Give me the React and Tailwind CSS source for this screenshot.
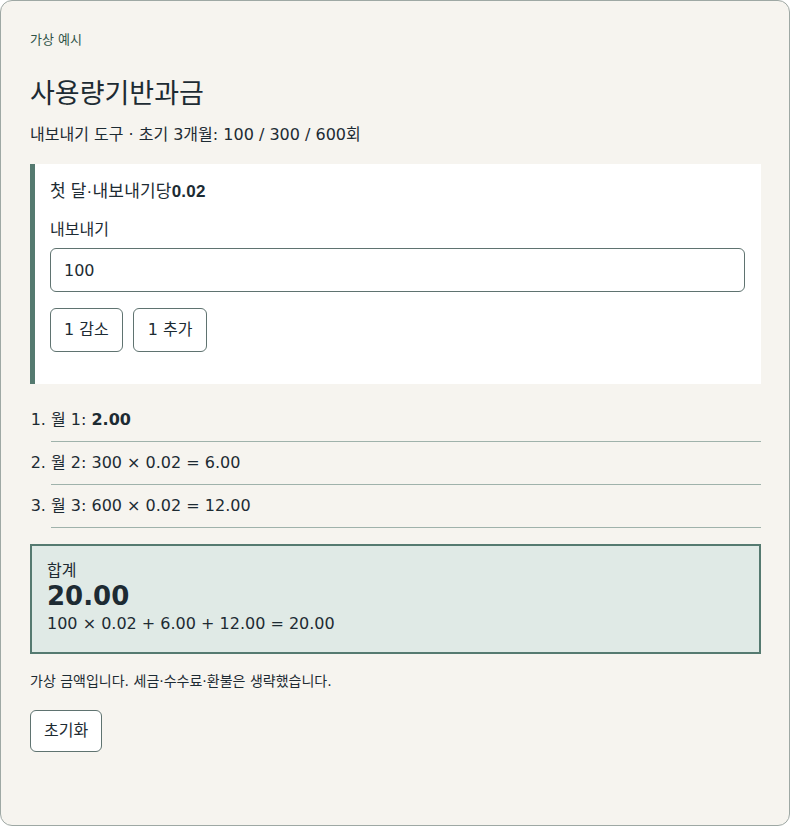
import React, { useState } from "react";

const RATE = 0.02;
const MONTHS = [100, 300, 600];

export default function App() {
  const [exportsCount, setExportsCount] = useState(100);

  const first = exportsCount * RATE;
  const rest = MONTHS.slice(1).map((n) => n * RATE);
  const total = first + rest.reduce((a, b) => a + b, 0);

  return (
    <div className="w-[790px] h-[826px] bg-[#f6f4ef] border border-[#9ea8a4] rounded-[12px] pl-[29px] pr-[28px] pt-[29px] text-[#1d2b33] font-['DejaVu_Sans','Noto_Sans_CJK_KR',sans-serif]">
      <p className="text-[13px] leading-[20px] text-[#2f5348]">가상 예시</p>

      <h1 className="mt-[24px] text-[27px] leading-[36px] font-['Noto_Sans_CJK_KR',sans-serif] text-[#1d2b33]">
        사용량기반과금
      </h1>

      <p className="mt-[13px] text-[16px] leading-[24px]">
        내보내기 도구 · 초기 3개월: 100 / 300 / 600회
      </p>

      <div className="mt-[17px] bg-white border-l-[5px] border-[#557a70] pl-[15px] pr-[16px] pt-[16px] pb-[32px]">
        <p className="text-[17px] leading-[24px] tracking-[0.2px] font-['Liberation_Sans','Noto_Sans_CJK_KR',sans-serif]">
          첫 달·내보내기당<strong className="font-bold">0.02</strong>
        </p>
        <label htmlFor="exports" className="block mt-[14px] text-[16px] leading-[24px]">
          내보내기
        </label>
        <input
          id="exports"
          type="text"
          value={exportsCount}
          onChange={(e) => setExportsCount(Number(e.target.value) || 0)}
          className="mt-[6px] block w-full h-[44px] px-[13px] bg-white border border-[#5f7370] rounded-[6px] text-[16px] outline-none"
        />
        <div className="mt-[16px] flex gap-[10px]">
          <button
            onClick={() => setExportsCount(Math.max(0, exportsCount - 1))}
            className="h-[44px] px-[13px] bg-white border border-[#5f7370] rounded-[6px] text-[16px]"
          >
            1 감소
          </button>
          <button
            onClick={() => setExportsCount(exportsCount + 1)}
            className="h-[44px] px-[14px] bg-white border border-[#5f7370] rounded-[6px] text-[16px]"
          >
            1 추가
          </button>
        </div>
      </div>

      <ol className="mt-[15px] pl-[21px] list-decimal text-[16px] leading-[24px]">
        <li className="py-[9px] border-b border-[#9fb2ab]">
          월 1: <strong className="font-bold">{first.toFixed(2)}</strong>
        </li>
        <li className="py-[9px] border-b border-[#9fb2ab]">
          월 2: 300 × 0.02 = {rest[0].toFixed(2)}
        </li>
        <li className="py-[9px] border-b border-[#9fb2ab]">
          월 3: 600 × 0.02 = {rest[1].toFixed(2)}
        </li>
      </ol>

      <div className="mt-[16px] bg-[#e0eae6] border-2 border-[#557a70] px-[15px] pt-[14px] pb-[16px]">
        <p className="text-[16px] leading-[22px]">합계</p>
        <p className="text-[26px] leading-[28px] font-bold">{total.toFixed(2)}</p>
        <p className="text-[16px] leading-[24px] mt-[2px]">
          {exportsCount} × 0.02 + {rest[0].toFixed(2)} + {rest[1].toFixed(2)} = {total.toFixed(2)}
        </p>
      </div>

      <p className="mt-[17px] text-[14px] leading-[20px]">
        가상 금액입니다. 세금·수수료·환불은 생략했습니다.
      </p>

      <button
        onClick={() => setExportsCount(100)}
        className="mt-[19px] h-[42px] px-[13px] bg-white border border-[#5f7370] rounded-[6px] text-[16px]"
      >
        초기화
      </button>
    </div>
  );
}
